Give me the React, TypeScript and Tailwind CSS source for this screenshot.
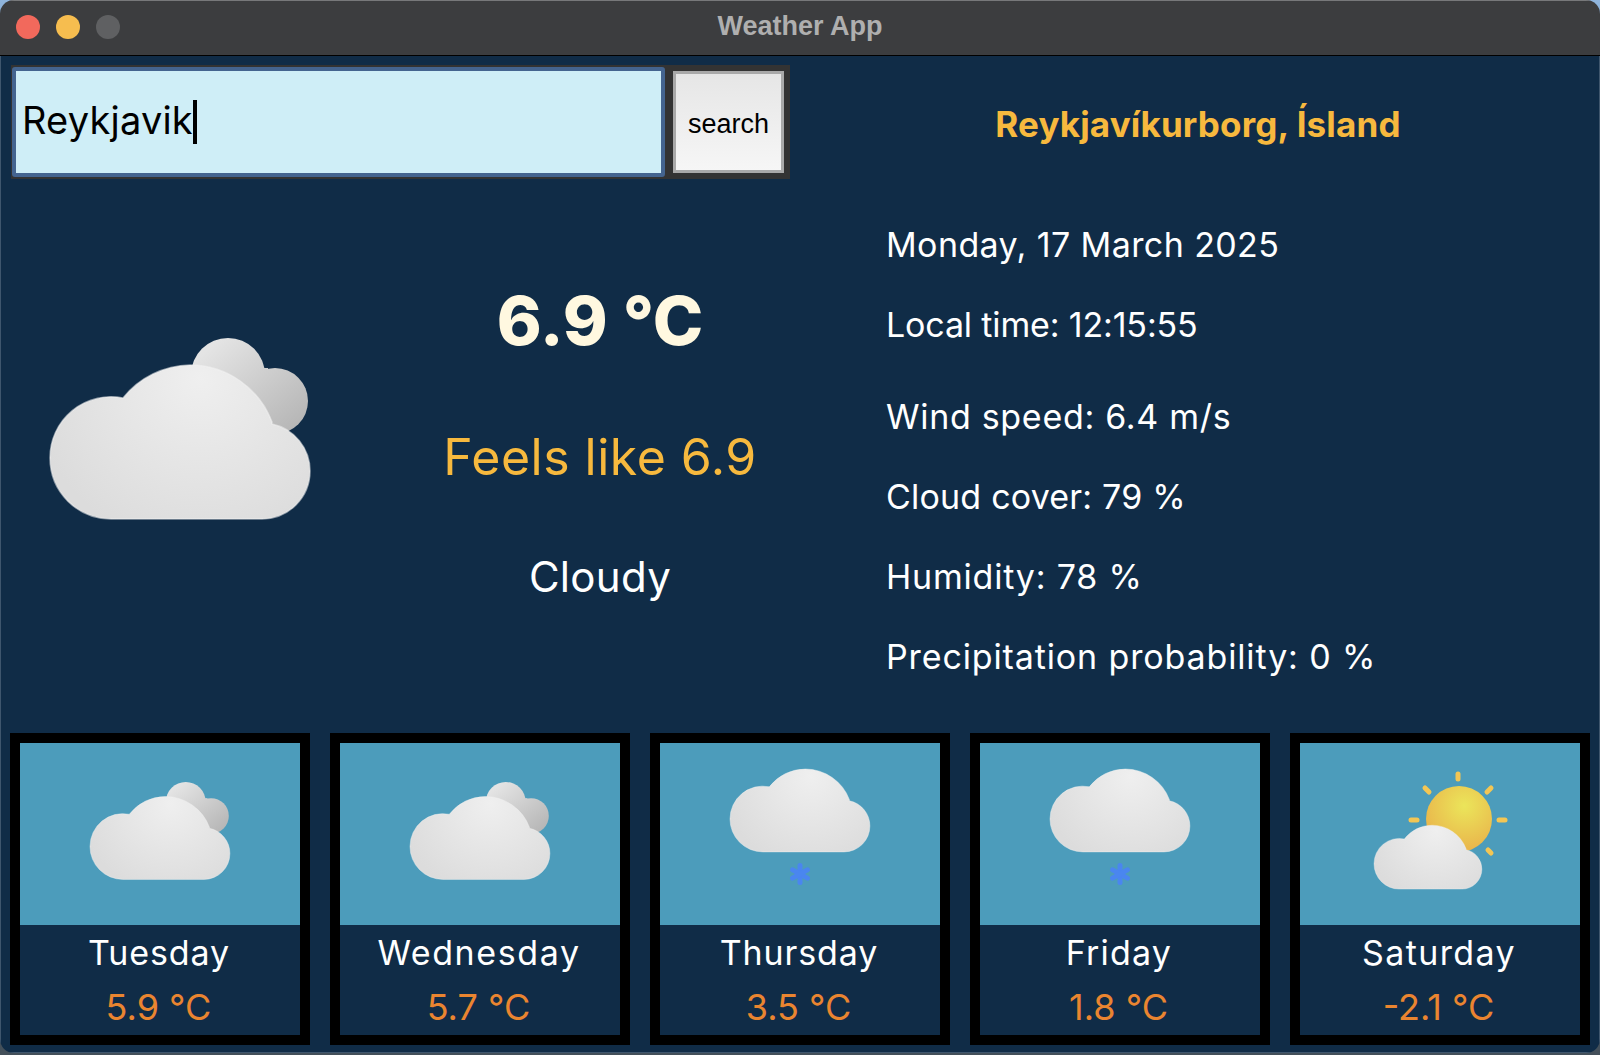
import React from "react";

const FRONT = "M61,181 A61,61 0 0 1 0,120 A61,61 0 0 1 73,60 A88,88 0 0 1 140,27 A88,88 0 0 1 222,84 L222,86 A48,48 0 0 1 260,133 A48,48 0 0 1 212,181 Z";

function Defs({ id }: { id: string }) {
  return (
    <defs>
      <radialGradient id={`${id}-front`} gradientUnits="userSpaceOnUse" cx="150" cy="40" r="170">
        <stop offset="0" stopColor="#efefef" />
        <stop offset="1" stopColor="#dcdcdc" />
      </radialGradient>
      <linearGradient id={`${id}-back`} gradientUnits="userSpaceOnUse" x1="165" y1="5" x2="240" y2="95">
        <stop offset="0" stopColor="#e4e4e4" />
        <stop offset="1" stopColor="#b6b6b6" />
      </linearGradient>
      <radialGradient id={`${id}-sun`} cx="0.58" cy="0.3" r="0.75">
        <stop offset="0" stopColor="#ebe55a" />
        <stop offset="1" stopColor="#e9b04a" />
      </radialGradient>
    </defs>
  );
}

function Cloud({ id, back = true }: { id: string; back?: boolean }) {
  return (
    <g>
      {back && (
        <g fill={`url(#${id}-back)`}>
          <circle cx="178" cy="37" r="37" />
          <circle cx="225" cy="63" r="33" />
          <rect x="178" y="30" width="40" height="60" />
        </g>
      )}
      <path d={FRONT} fill={`url(#${id}-front)`} stroke="#f2f2f2" strokeOpacity="0.55" strokeWidth="1.5" />
    </g>
  );
}

function CardIcon({ kind, id }: { kind: "cloudy" | "snow" | "sun"; id: string }) {
  return (
    <svg width="280" height="182" viewBox="0 0 280 182" className="block bg-[#4c9cbb]">
      <Defs id={id} />
      {kind === "cloudy" && (
        <g transform="translate(70 39) scale(0.538)">
          <Cloud id={id} />
        </g>
      )}
      {kind === "snow" && (
        <g>
          <g transform="translate(70 11.5) scale(0.538)">
            <Cloud id={id} back={false} />
          </g>
          <g stroke="#4a86f0" strokeWidth="5" strokeLinecap="round" transform="translate(140 131)">
            <line x1="0" y1="-8.5" x2="0" y2="8.5" />
            <line x1="-7.4" y1="-4.2" x2="7.4" y2="4.2" />
            <line x1="-7.4" y1="4.2" x2="7.4" y2="-4.2" />
          </g>
        </g>
      )}
      {kind === "sun" && (
        <g>
          <g stroke="#f3c654" strokeWidth="5" strokeLinecap="round">
            <line x1="158" y1="31" x2="158" y2="36" />
            <line x1="125" y1="45" x2="129" y2="49" />
            <line x1="191" y1="45" x2="187" y2="49" />
            <line x1="111" y1="77" x2="117" y2="77" />
            <line x1="199" y1="77" x2="205" y2="77" />
            <line x1="188" y1="107" x2="191" y2="110" />
          </g>
          <circle cx="159" cy="76" r="33" fill={`url(#${id}-sun)`} />
          <g transform="translate(74 71) scale(0.415)">
            <Cloud id={id} back={false} />
          </g>
        </g>
      )}
    </svg>
  );
}

const days = [
  { day: "Tuesday", temp: "5.9 °C", kind: "cloudy" as const, track: "tracking-[0.87px]" },
  { day: "Wednesday", temp: "5.7 °C", kind: "cloudy" as const, track: "tracking-[1.6px]" },
  { day: "Thursday", temp: "3.5 °C", kind: "snow" as const, track: "tracking-[0.9px]" },
  { day: "Friday", temp: "1.8 °C", kind: "snow" as const, track: "tracking-[1.2px]" },
  { day: "Saturday", temp: "-2.1 °C", kind: "sun" as const, track: "tracking-[1.4px]" },
];

const detail = "h-[40px] leading-[40px] text-[34px] text-white whitespace-nowrap";

export default function App() {
  return (
    <div className="w-[1600px] h-[1055px] overflow-hidden bg-gradient-to-b from-[#8fb4dc] via-[#2f4d68] to-[#44505a] font-['Inter','Liberation_Sans',sans-serif]">
      <div className="w-[1600px] h-[1053px] rounded-[14px] overflow-hidden flex flex-col">
        <div className="h-[56px] shrink-0 relative flex items-center justify-center bg-[#3c3d3f] border-t border-t-[#77787a] border-b border-b-black">
          <div className="absolute left-[16px] top-[14px] flex gap-[16px]">
            <span className="w-[24px] h-[24px] rounded-full bg-[#f2695c]" />
            <span className="w-[24px] h-[24px] rounded-full bg-[#f6bd4f]" />
            <span className="w-[24px] h-[24px] rounded-full bg-[#5f6062]" />
          </div>
          <span className="text-[27px] font-bold text-[#afafaf] mb-[4px] font-['Liberation_Sans',sans-serif]">Weather App</span>
        </div>

        <div className="flex-1 flex flex-col bg-[#102c47] shadow-[inset_1px_0_0_#3f566d,inset_-1px_0_0_#3f566d,inset_0_-1px_0_#3f566d]">
          <div className="flex items-start pt-[9px]">
            <div className="ml-[11px] w-[779px] h-[114px] flex items-center gap-[8px] bg-[#333333] pl-[1px] pr-[6px]">
              <div className="w-[653px] h-[110px] flex items-center rounded-[3px] border-[4px] border-[#44648f] bg-[#cfeef7] pl-[6px]">
                <span className="text-[38px] tracking-[0.2px] mb-[4px] text-black leading-none">Reykjavik</span>
                <span className="w-[4px] h-[44px] bg-black" />
              </div>
              <div className="w-[111px] h-[102px] flex items-center justify-center border-[3px] border-[#a9a9a9] bg-gradient-to-b from-[#e6e6e6] to-[#f6f6f6] pt-[4px] text-[27px] text-black font-['Liberation_Sans',sans-serif]">
                search
              </div>
            </div>
            <div className="flex-1 h-[114px] flex items-center justify-center pl-[6px] pt-[4px]">
              <span className="text-[35px] tracking-[0.15px] font-bold text-[#f7b93e] whitespace-nowrap">Reykjavíkurborg, Ísland</span>
            </div>
          </div>

          <div className="h-[554px] flex">
            <div className="w-[360px] pl-[50px] pt-[159px]">
              <svg width="260" height="181" viewBox="0 0 260 181" className="block overflow-visible">
                <Defs id="main" />
                <Cloud id="main" />
              </svg>
            </div>
            <div className="w-[480px] flex flex-col items-center">
              <div className="mt-[101px] h-[80px] leading-[80px] text-[68px] font-extrabold text-[#fff8e0]">6.9 °C</div>
              <div className="mt-[67px] h-[60px] leading-[60px] text-[50px] tracking-[0.5px] text-[#f7b93e]">Feels like 6.9</div>
              <div className="mt-[65px] h-[50px] leading-[50px] text-[42px] tracking-[0.3px] text-white">Cloudy</div>
            </div>
            <div className="pl-[46px] pt-[46px] flex flex-col">
              <div className={`${detail} tracking-[0.4px]`}>Monday, 17 March 2025</div>
              <div className={`${detail} tracking-[-0.15px] mt-[40px]`}>Local time: 12:15:55</div>
              <div className={`${detail} tracking-[0.7px] mt-[52px]`}>Wind speed: 6.4 m/s</div>
              <div className={`${detail} tracking-[0.2px] mt-[40px]`}>Cloud cover: 79 %</div>
              <div className={`${detail} tracking-[0.8px] mt-[40px]`}>Humidity: 78 %</div>
              <div className={`${detail} tracking-[0.87px] mt-[40px]`}>Precipitation probability: 0 %</div>
            </div>
          </div>

          <div className="flex gap-[20px] px-[10px]">
            {days.map((d, i) => (
              <div key={d.day} className="w-[300px] h-[312px] border-[10px] border-black">
                <CardIcon kind={d.kind} id={`c${i}`} />
                <div className={`h-[55px] leading-[55px] pr-[2px] text-center text-[34px] text-white ${d.track}`}>{d.day}</div>
                <div className="h-[55px] leading-[55px] pr-[3px] text-center text-[36px] text-[#ea8530]">{d.temp}</div>
              </div>
            ))}
          </div>
        </div>
      </div>
    </div>
  );
}
